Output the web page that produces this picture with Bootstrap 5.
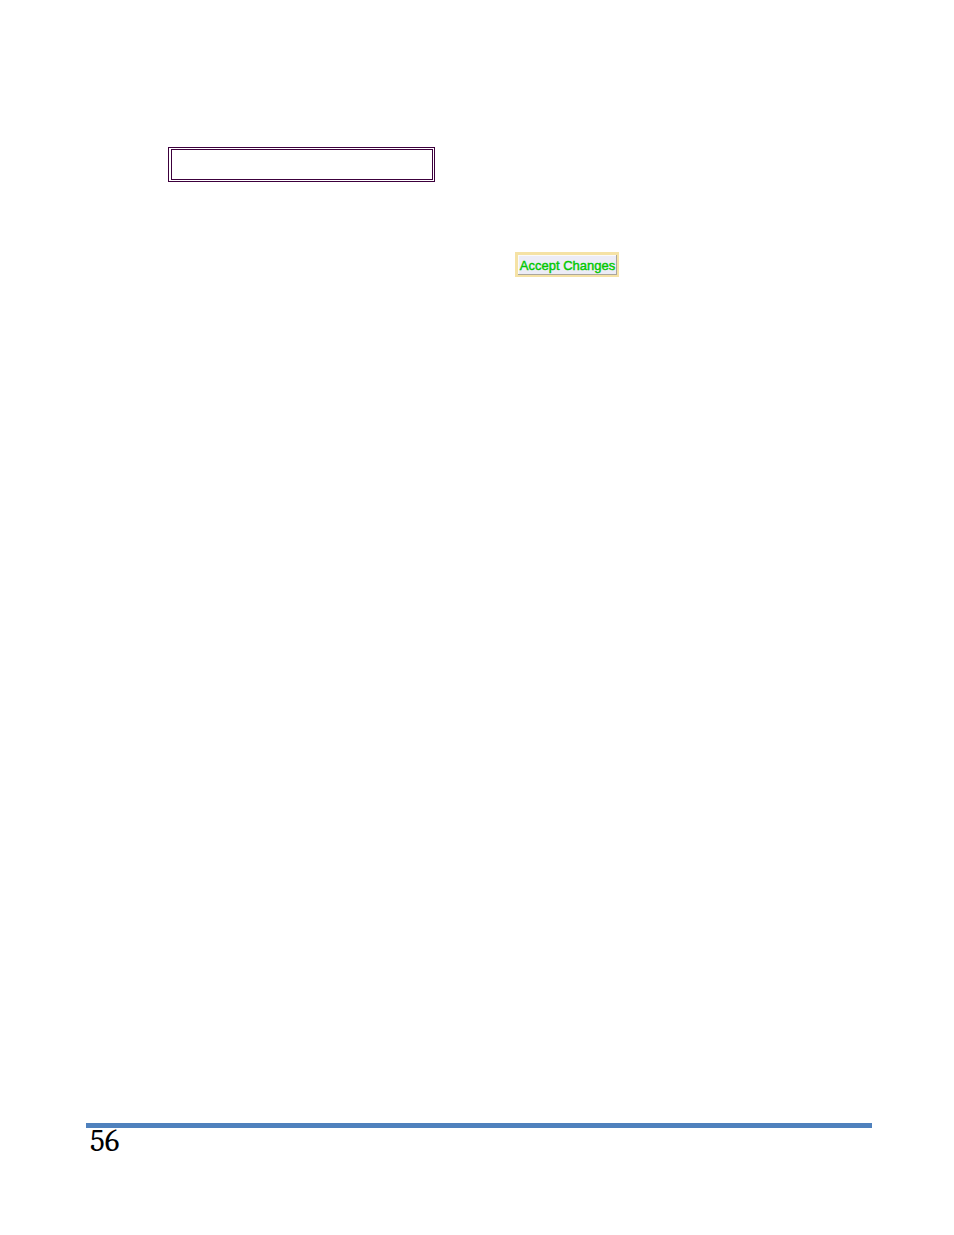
<!DOCTYPE html>
<html lang="en">
<head>
<meta charset="utf-8">
<meta name="viewport" content="width=device-width, initial-scale=1">
<title>Page 56</title>
<link href="https://cdn.jsdelivr.net/npm/bootstrap@5.3.0/dist/css/bootstrap.min.css" rel="stylesheet">
<style>
  .sheet { padding: 147px 82px 80px 86px; }
  .sheet-body { padding-left: 82px; }
  /* Title frame: two thin plum rules, one inside the other */
  .title-frame { width: 267px; height: 35px; border: 1px solid #3c003c; padding: 1px 1px 1px 2px; }
  .title-frame-inner { border: 1px solid #3c003c; }
  .action-row { padding: 70px 0 0 347px; }
  .btn-accept {
    width: 104px; height: 25px; padding: 2px 0 0;
    border: 2px solid #f5e2a5; border-left-width: 3px; border-top-width: 3px; border-radius: 0;
    background: #ececf6; color: #00c800;
    box-shadow: inset -1px -1px #aaa69e, inset 1px 1px #fafafa;
    font: 13px/18px "Liberation Sans", Arial, sans-serif;
    -webkit-text-stroke: .4px #00c800;
  }
  .btn-accept:hover { background: #f5f5fb; color: #00c800; border-color: #f5e2a5; }
  .page-foot { border-top: 5px solid #4f81bd; padding-left: 4px; }
  .page-number { font: 31px/27px Cambria, "Noto Serif", "Droid Serif", "Liberation Serif", serif; color: #000; }
</style>
</head>
<body class="bg-white">
<div class="sheet d-flex flex-column min-vh-100">
  <main class="sheet-body flex-grow-1">
    <div class="title-frame d-flex"><div class="title-frame-inner flex-grow-1"></div></div>
    <div class="action-row d-flex">
      <button type="button" class="btn btn-accept d-flex align-items-center justify-content-center text-nowrap">Accept Changes</button>
    </div>
  </main>
  <footer class="page-foot d-flex">
    <span class="page-number">56</span>
  </footer>
</div>
<script src="https://cdn.jsdelivr.net/npm/bootstrap@5.3.0/dist/js/bootstrap.bundle.min.js"></script>
</body>
</html>
